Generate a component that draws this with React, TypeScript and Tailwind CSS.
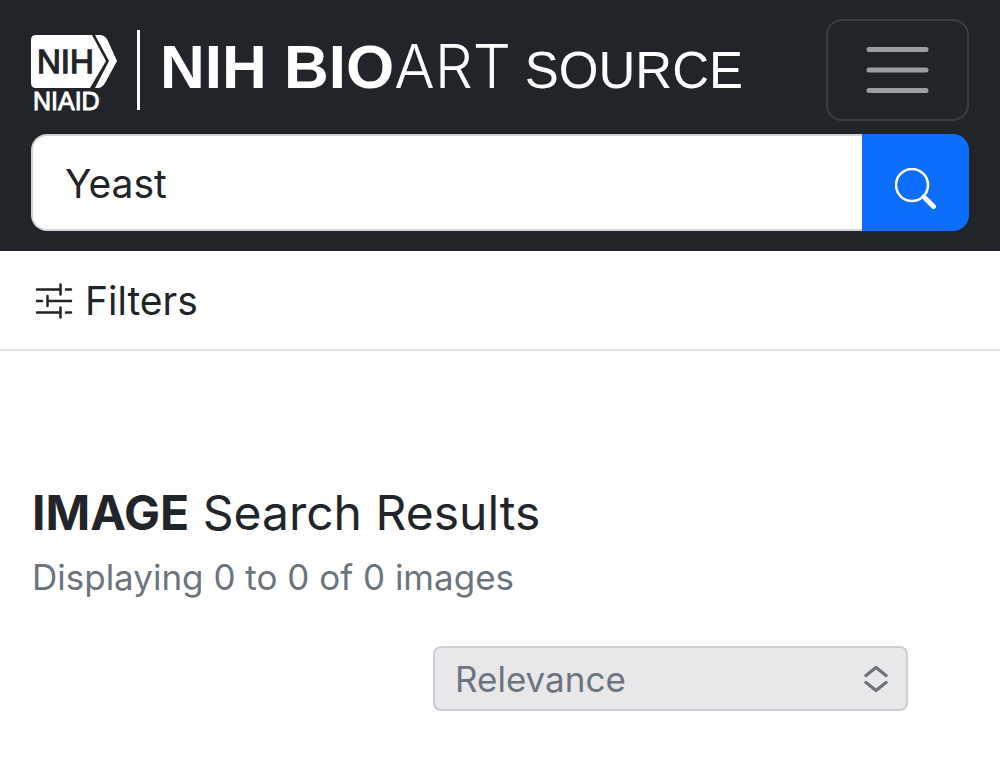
import { useState } from "react";
import type { FormEvent } from "react";

function NiaidLogo() {
    return (
        <svg width="88" height="90" viewBox="0 -5 88 90" className="shrink-0" role="img" aria-label="NIH NIAID">
            <path d="M5 5H61L75 31L59 58H5Q0 58 0 53V10Q0 5 5 5Z" fill="#fff" />
            <path d="M64 5H69Q73 5 76 9L86 31L74 53Q71 58 67 58H64L78 31Z" fill="#fff" />
            <text x="6" y="43" fontSize="33" fill="#212529" stroke="#212529" strokeWidth="1.3" className="font-['Liberation_Sans',sans-serif]">NIH</text>
            <text x="2" y="80" fontSize="25" fill="#fff" stroke="#fff" strokeWidth="0.9" className="font-['Liberation_Sans',sans-serif]">NIAID</text>
        </svg>
    );
}

function Header() {
    const [query, setQuery] = useState("Yeast");

    return (
        <header className="bg-[#212529] px-[31px] pt-[19px] pb-5">
            <div className="flex items-center justify-between">
                <a href="#" className="flex items-center text-white whitespace-nowrap">
                    <NiaidLogo />
                    <span className="w-[3px] h-20 bg-white ml-[18px] mr-5" />
                    <span className="flex items-baseline pb-1 font-['Liberation_Sans',sans-serif] text-[62px] leading-[68px]">
                        <span className="font-bold">NIH BIO</span>
                        <span className="font-['Inter',sans-serif] text-[60px] font-light">ART</span>
                        <span className="text-[51px] ml-3.5">SOURCE</span>
                    </span>
                </a>
                <button
                    type="button"
                    aria-label="Toggle navigation"
                    className="flex items-center justify-center w-[143px] h-[102px] shrink-0 rounded-2xl border-2 border-[#3a3d41]"
                >
                    <svg width="64" height="48" viewBox="0 0 64 48" fill="none" stroke="#9b9fa2" strokeWidth="5" strokeLinecap="round">
                        <path d="M3 3.5H60M3 24H60M3 44.5H60" />
                    </svg>
                </button>
            </div>
            <form className="flex mt-[13px]" onSubmit={(e: FormEvent) => e.preventDefault()}>
                <input
                    type="text"
                    aria-label="Search"
                    value={query}
                    onChange={(e) => setQuery(e.target.value)}
                    className="flex-1 min-w-0 h-[97px] px-8 pt-0.5 text-[39px] text-[#212529] bg-white rounded-l-2xl border-2 border-r-0 border-[#ced4da] focus:outline-none"
                />
                <button
                    type="submit"
                    aria-label="Submit search"
                    className="flex items-center justify-center w-[107px] pt-3 shrink-0 rounded-r-2xl bg-[#0d6efd]"
                >
                    <svg width="42" height="42" viewBox="0 0 42 42" fill="none" stroke="#fff" strokeLinecap="round">
                        <circle cx="17" cy="17" r="16" strokeWidth="2.6" />
                        <path d="M28.5 28.5L31 31" strokeWidth="4" />
                        <path d="M31 31L38.5 38.5" strokeWidth="5" />
                    </svg>
                </button>
            </form>
        </header>
    );
}

function FilterBar() {
    return (
        <div className="h-[100px] px-[35px] pt-0.5 flex items-center border-b-2 border-[#dee2e6]">
            <button type="button" className="flex items-center gap-3 text-[39px]">
                <svg width="38" height="38" viewBox="0 0 38 38" fill="none" stroke="#212529" strokeWidth="2.5" strokeLinecap="round">
                    <path d="M2 7.5H25.5M31 7.5H36M25.5 2.5V12.5" />
                    <path d="M2 19H7M12.5 19H36M12.5 14V24" />
                    <path d="M2 30.5H25.5M31 30.5H36M25.5 25.5V35.5" />
                </svg>
                Filters
            </button>
        </div>
    );
}

function Results() {
    return (
        <main className="px-8 pt-[132px] pb-[67px]">
            <h1 className="text-[48px] leading-[60px]">
                <b className="font-bold">IMAGE</b> Search Results
            </h1>
            <p className="mt-2 text-[35px] leading-[52px] text-[#6c757d]">Displaying 0 to 0 of 0 images</p>
            <div className="relative w-[475px] mt-[43px] ml-auto mr-[60px]">
                <select
                    aria-label="Sort by"
                    disabled
                    className="w-full h-[65px] pl-5 pr-16 pt-0.5 appearance-none rounded-lg border-2 border-[#c9d0d4] bg-[#e8e8eb] text-[35px] text-[#6c757d] opacity-100"
                >
                    <option>Relevance</option>
                </select>
                <svg
                    width="24" height="28" viewBox="0 0 24 28"
                    fill="none" stroke="#6c757d" strokeWidth="3.4" strokeLinecap="round" strokeLinejoin="round"
                    className="absolute right-5 top-1/2 -translate-y-1/2 pointer-events-none"
                >
                    <path d="M2 10.5L12 2.5L22 10.5M2 17.5L12 25.5L22 17.5" />
                </svg>
            </div>
        </main>
    );
}

export default function App() {
    return (
        <div className="bg-white text-[#212529] font-['Inter',sans-serif]">
            <Header />
            <FilterBar />
            <Results />
        </div>
    );
}
